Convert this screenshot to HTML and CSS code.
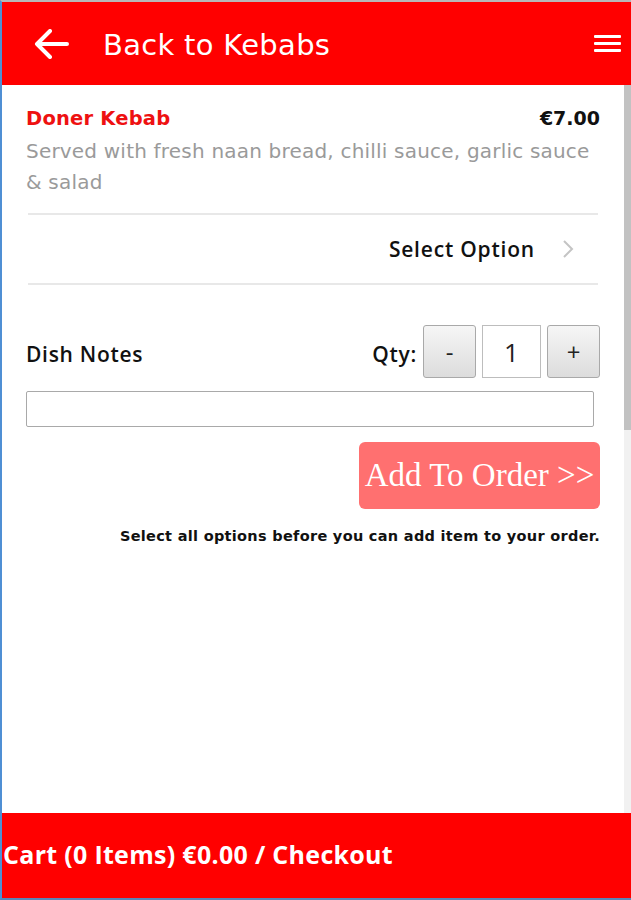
FILE: index.html
```html
<!DOCTYPE html>
<html>
<head>
<meta charset="utf-8">
<link rel="stylesheet" href="styles.css">
</head>
<body>
<div class="frame">
  <header class="topbar">
    <svg class="back" width="36" height="30" viewBox="0 0 36 30"><path d="M34 15H4M17 2L4 15L17 28" fill="none" stroke="#fff" stroke-width="4" stroke-linecap="round" stroke-linejoin="round"/></svg>
    <span class="title">Back to Kebabs</span>
    <span class="burger"><i></i><i></i><i></i></span>
  </header>
  <div class="middle">
    <main class="content">
      <div class="item-head">
        <span class="name">Doner Kebab</span>
        <span class="price">€7.00</span>
      </div>
      <p class="desc">Served with fresh naan bread, chilli sauce, garlic sauce &amp; salad</p>
      <div class="option-row">
        <span class="option-label">Select Option</span>
        <svg class="chev" width="12" height="20" viewBox="0 0 12 20"><path d="M2 2L10 10L2 18" fill="none" stroke="#c4c4c4" stroke-width="2"/></svg>
      </div>
      <div class="qty-row">
        <span class="notes-label">Dish Notes</span>
        <div class="qty">
          <span class="qty-label">Qty:</span>
          <button class="qbtn">-</button>
          <input class="qinput" value="1">
          <button class="qbtn">+</button>
        </div>
      </div>
      <input class="notes" type="text">
      <div class="actions"><button class="add">Add To Order &gt;&gt;</button></div>
      <p class="hint">Select all options before you can add item to your order.</p>
    </main>
    <div class="scrollbar"><div class="thumb"></div></div>
  </div>
  <footer class="cartbar">Cart (0 Items) €0.00 / Checkout</footer>
</div>
</body>
</html>
```
FILE: styles.css
```css
* { box-sizing: border-box; }
html, body { margin: 0; padding: 0; background: #fff; }
.frame {
  width: 631px;
  height: 900px;
  display: flex;
  flex-direction: column;
  border-top: 2px solid #b8b8b8;
  border-left: 2px solid #4f8fd4;
  border-bottom: 2px solid #5b86b8;
  overflow: hidden;
}
.topbar {
  height: 83px;
  flex: none;
  background: #ff0000;
  display: flex;
  align-items: center;
  padding-left: 31px;
  padding-right: 10px;
}
.back { display: block; }
.title {
  font-family: "DejaVu Sans", sans-serif;
  color: #fff;
  font-size: 29px;
  margin-left: 34px;
  letter-spacing: 0.3px;
  margin-top: 2px;
}
.burger {
  margin-left: auto;
  width: 27px;
  display: flex;
  flex-direction: column;
  gap: 4px;
}
.burger i { display: block; height: 3px; background: #fff; border-radius: 1px; }
.middle { flex: 1; display: flex; min-height: 0; }
.content { flex: 1; padding: 22px 24px 0 24px; }
.scrollbar { width: 7px; background: #f1f1f1; flex: none; }
.thumb { height: 345px; background: #c2c2c2; }
.item-head { display: flex; justify-content: space-between; align-items: baseline; height: 29px; }
.name { font-family: "DejaVu Sans", sans-serif; font-weight: bold; color: #ee1111; font-size: 19.5px; letter-spacing: 0.2px; }
.price { font-family: "DejaVu Sans", sans-serif; font-weight: bold; color: #111; font-size: 19px; }
.desc {
  margin: 0;
  font-family: "DejaVu Sans", sans-serif;
  color: #9a9a9a;
  font-size: 20px;
  line-height: 31px;
  letter-spacing: 0.2px;
}
.option-row {
  margin: 15px 2px 0 2px;
  border-top: 2px solid #e8e8e8;
  border-bottom: 2px solid #e8e8e8;
  height: 72px;
  display: flex;
  align-items: center;
  justify-content: flex-end;
  padding-right: 24px;
}
.option-label { font-family: "Open Sans", sans-serif; font-weight: 600; font-size: 21px; letter-spacing: 0.8px; color: #111; margin-right: 27px; }
.chev { display: block; }
.qty-row { display: flex; justify-content: space-between; align-items: center; margin-top: 40px; }
.notes-label { font-family: "Open Sans", sans-serif; font-weight: 600; font-size: 21px; letter-spacing: 0.7px; color: #111; margin-top: 5px; }
.qty { display: flex; align-items: center; }
.qty-label { font-family: "Open Sans", sans-serif; font-weight: 600; font-size: 21px; letter-spacing: 0.7px; color: #111; margin-right: 6px; margin-top: 5px; }
.qbtn {
  width: 53px; height: 53px;
  border: 1px solid #a9a9a9;
  border-radius: 3px;
  background: linear-gradient(#f6f6f6, #dcdcdc);
  font-family: "Open Sans", sans-serif;
  font-size: 24px;
  color: #222;
  padding: 0;
  margin: 0;
}
.qinput {
  width: 59px; height: 53px;
  border: 1px solid #bdbdbd;
  margin: 0 6px;
  text-align: center;
  font-family: "Open Sans", sans-serif;
  font-size: 26px;
  color: #222;
  padding: 0;
}
.notes {
  display: block;
  width: 568px;
  height: 36px;
  margin-top: 13px;
  border: 1px solid #a9a9a9;
  border-radius: 2px;
}
.actions { display: flex; justify-content: flex-end; margin-top: 15px; }
.add {
  width: 241px; height: 67px;
  background: #ff7070;
  border: none;
  border-radius: 6px;
  color: #fff;
  font-family: "Liberation Serif", serif;
  font-size: 33px;
  padding: 0;
}
.hint {
  margin: 19px 0 0 0;
  text-align: right;
  font-family: "DejaVu Sans", sans-serif;
  font-weight: bold;
  font-size: 14.5px;
  color: #111;
  letter-spacing: 0.3px;
}
.cartbar {
  height: 85px;
  flex: none;
  background: #ff0000;
  color: #fff;
  font-family: "Open Sans", sans-serif;
  font-weight: bold;
  font-size: 25px;
  display: flex;
  align-items: center;
  padding-left: 1px;
  padding-bottom: 3px;
  letter-spacing: 0.3px;
}
```
